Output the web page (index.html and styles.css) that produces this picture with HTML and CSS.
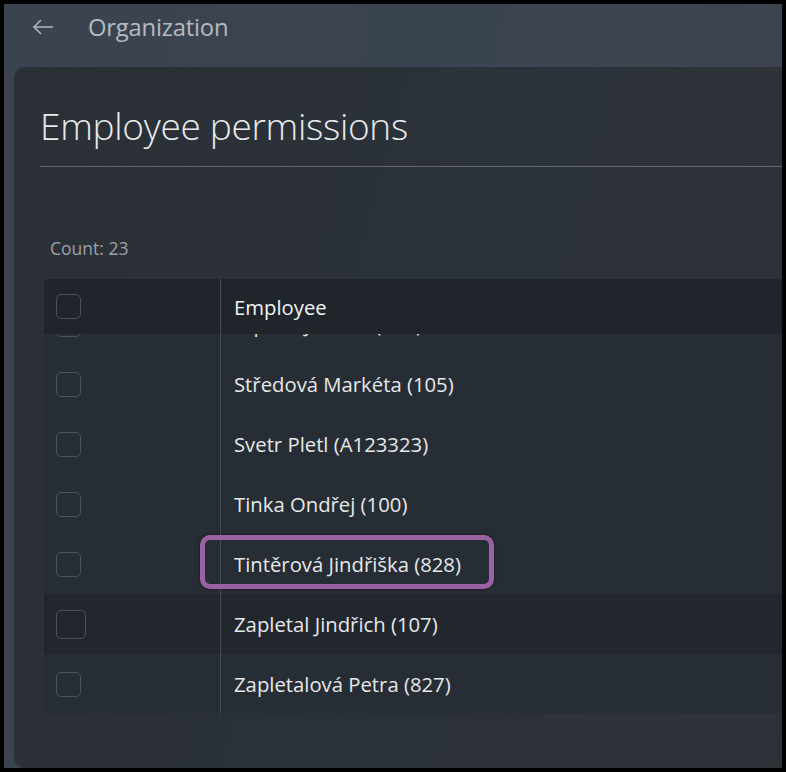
FILE: index.html
```html
<!DOCTYPE html>
<html lang="cs">
<head>
<meta charset="utf-8">
<title>Employee permissions</title>
<link rel="stylesheet" href="styles.css">
</head>
<body>
<div class="frame">
  <header class="topbar">
    <button class="back" aria-label="Back">
      <svg width="22" height="16" viewBox="0 0 22 16" fill="none" stroke="currentColor" stroke-width="1.5" stroke-linecap="round" stroke-linejoin="round">
        <path d="M20.5 8H2"/>
        <path d="M8.5 1.5L2 8l6.5 6.5"/>
      </svg>
    </button>
    <span class="crumb">Organization</span>
  </header>
  <main class="card">
    <h1 class="title">Employee permissions</h1>
    <div class="divider"></div>
    <div class="count">Count: 23</div>
    <div class="table">
      <div class="thead">
        <div class="cell-check"><span class="checkbox"></span></div>
        <div class="cell-name">Employee</div>
      </div>
      <div class="tbody">
        <div class="rows">
          <div class="row partial"><div class="cell-check"><span class="checkbox"></span></div><div class="cell-name">Srpová Jarmila (109)</div></div>
          <div class="row"><div class="cell-check"><span class="checkbox"></span></div><div class="cell-name">Středová Markéta (105)</div></div>
          <div class="row"><div class="cell-check"><span class="checkbox"></span></div><div class="cell-name">Svetr Pletl (A123323)</div></div>
          <div class="row"><div class="cell-check"><span class="checkbox"></span></div><div class="cell-name">Tinka Ondřej (100)</div></div>
          <div class="row"><div class="cell-check"><span class="checkbox"></span></div><div class="cell-name">Tintěrová Jindřiška (828)<span class="mark"></span></div></div>
          <div class="row hover"><div class="cell-check"><span class="checkbox big"></span></div><div class="cell-name">Zapletal Jindřich (107)</div></div>
          <div class="row"><div class="cell-check"><span class="checkbox"></span></div><div class="cell-name">Zapletalová Petra (827)</div></div>
        </div>
      </div>
    </div>
  </main>
</div>
</body>
</html>
```
FILE: styles.css
```css
* { box-sizing: border-box; }
html, body { margin: 0; padding: 0; background: #000; }
body { font-family: "Open Sans", "Noto Sans", sans-serif; }

.frame {
  margin: 4px 0 0 4px;
  width: 778px;
  height: 764px;
  overflow: hidden;
  display: flex;
  flex-direction: column;
  background: linear-gradient(100deg, #3c4350 0%, #3a4450 50%, #3e4350 100%);
}

.topbar {
  height: 63px;
  flex: none;
  display: flex;
  align-items: flex-start;
  padding-top: 3px;
}
.back {
  margin-left: 24px;
  width: 30px;
  height: 40px;
  padding: 0;
  border: 0;
  background: none;
  color: #b4b8be;
  display: flex;
  align-items: center;
  justify-content: center;
}
.crumb {
  margin-left: 30px;
  line-height: 40px;
  font-size: 23.8px;
  color: #b6bac0;
  letter-spacing: -0.2px;
}

.card {
  flex: 1;
  margin-left: 10px;
  border-radius: 10px 0 0 10px;
  background: linear-gradient(105deg, #2b3037 0%, #2c3239 60%, #2f3139 100%);
  padding-left: 26px;
  display: flex;
  flex-direction: column;
}
.title {
  margin: 35px 0 0 0;
  font-size: 37px;
  line-height: 48px;
  font-weight: 300;
  color: #e8eaec;
  letter-spacing: -0.3px;
}
.divider {
  margin-top: 16px;
  height: 1px;
  background: #62666b;
}
.count {
  margin: 71px 0 0 10px;
  line-height: 20px;
  font-size: 17.5px;
  color: #9ca1a7;
}

.table {
  margin: 21px 0 0 4px;
  display: flex;
  flex-direction: column;
}
.thead, .row {
  display: flex;
  align-items: stretch;
}
.thead {
  height: 55px;
  background: #1f252b;
  border-radius: 6px 0 0 0;
}
.cell-check {
  width: 177px;
  flex: none;
  border-right: 1px solid #464c54;
  display: flex;
  align-items: center;
  padding-left: 12px;
}
.cell-name {
  position: relative;
  flex: 1;
  display: flex;
  align-items: center;
  padding-left: 13px;
  font-size: 20.3px;
  color: #e6e8ea;
  white-space: nowrap;
}
.thead .cell-name { color: #f2f4f6; }

.checkbox {
  width: 25px;
  height: 25px;
  border: 1px solid #4a525b;
  border-radius: 5px;
  background: transparent;
}
.checkbox.big {
  width: 30px;
  height: 29px;
}

.tbody {
  height: 379px;
  overflow: hidden;
  background: #272d34;
}
.rows { margin-top: -40px; }
.row {
  height: 60px;
  background: #272d34;
}
.row.hover { background: #21272d; }

.mark {
  position: absolute;
  left: -21px;
  top: 1px;
  width: 294px;
  height: 54px;
  border: 5px solid #9b62a3;
  border-radius: 10px;
  box-shadow: 0 0 3px rgba(0,0,0,0.6);
}
```
